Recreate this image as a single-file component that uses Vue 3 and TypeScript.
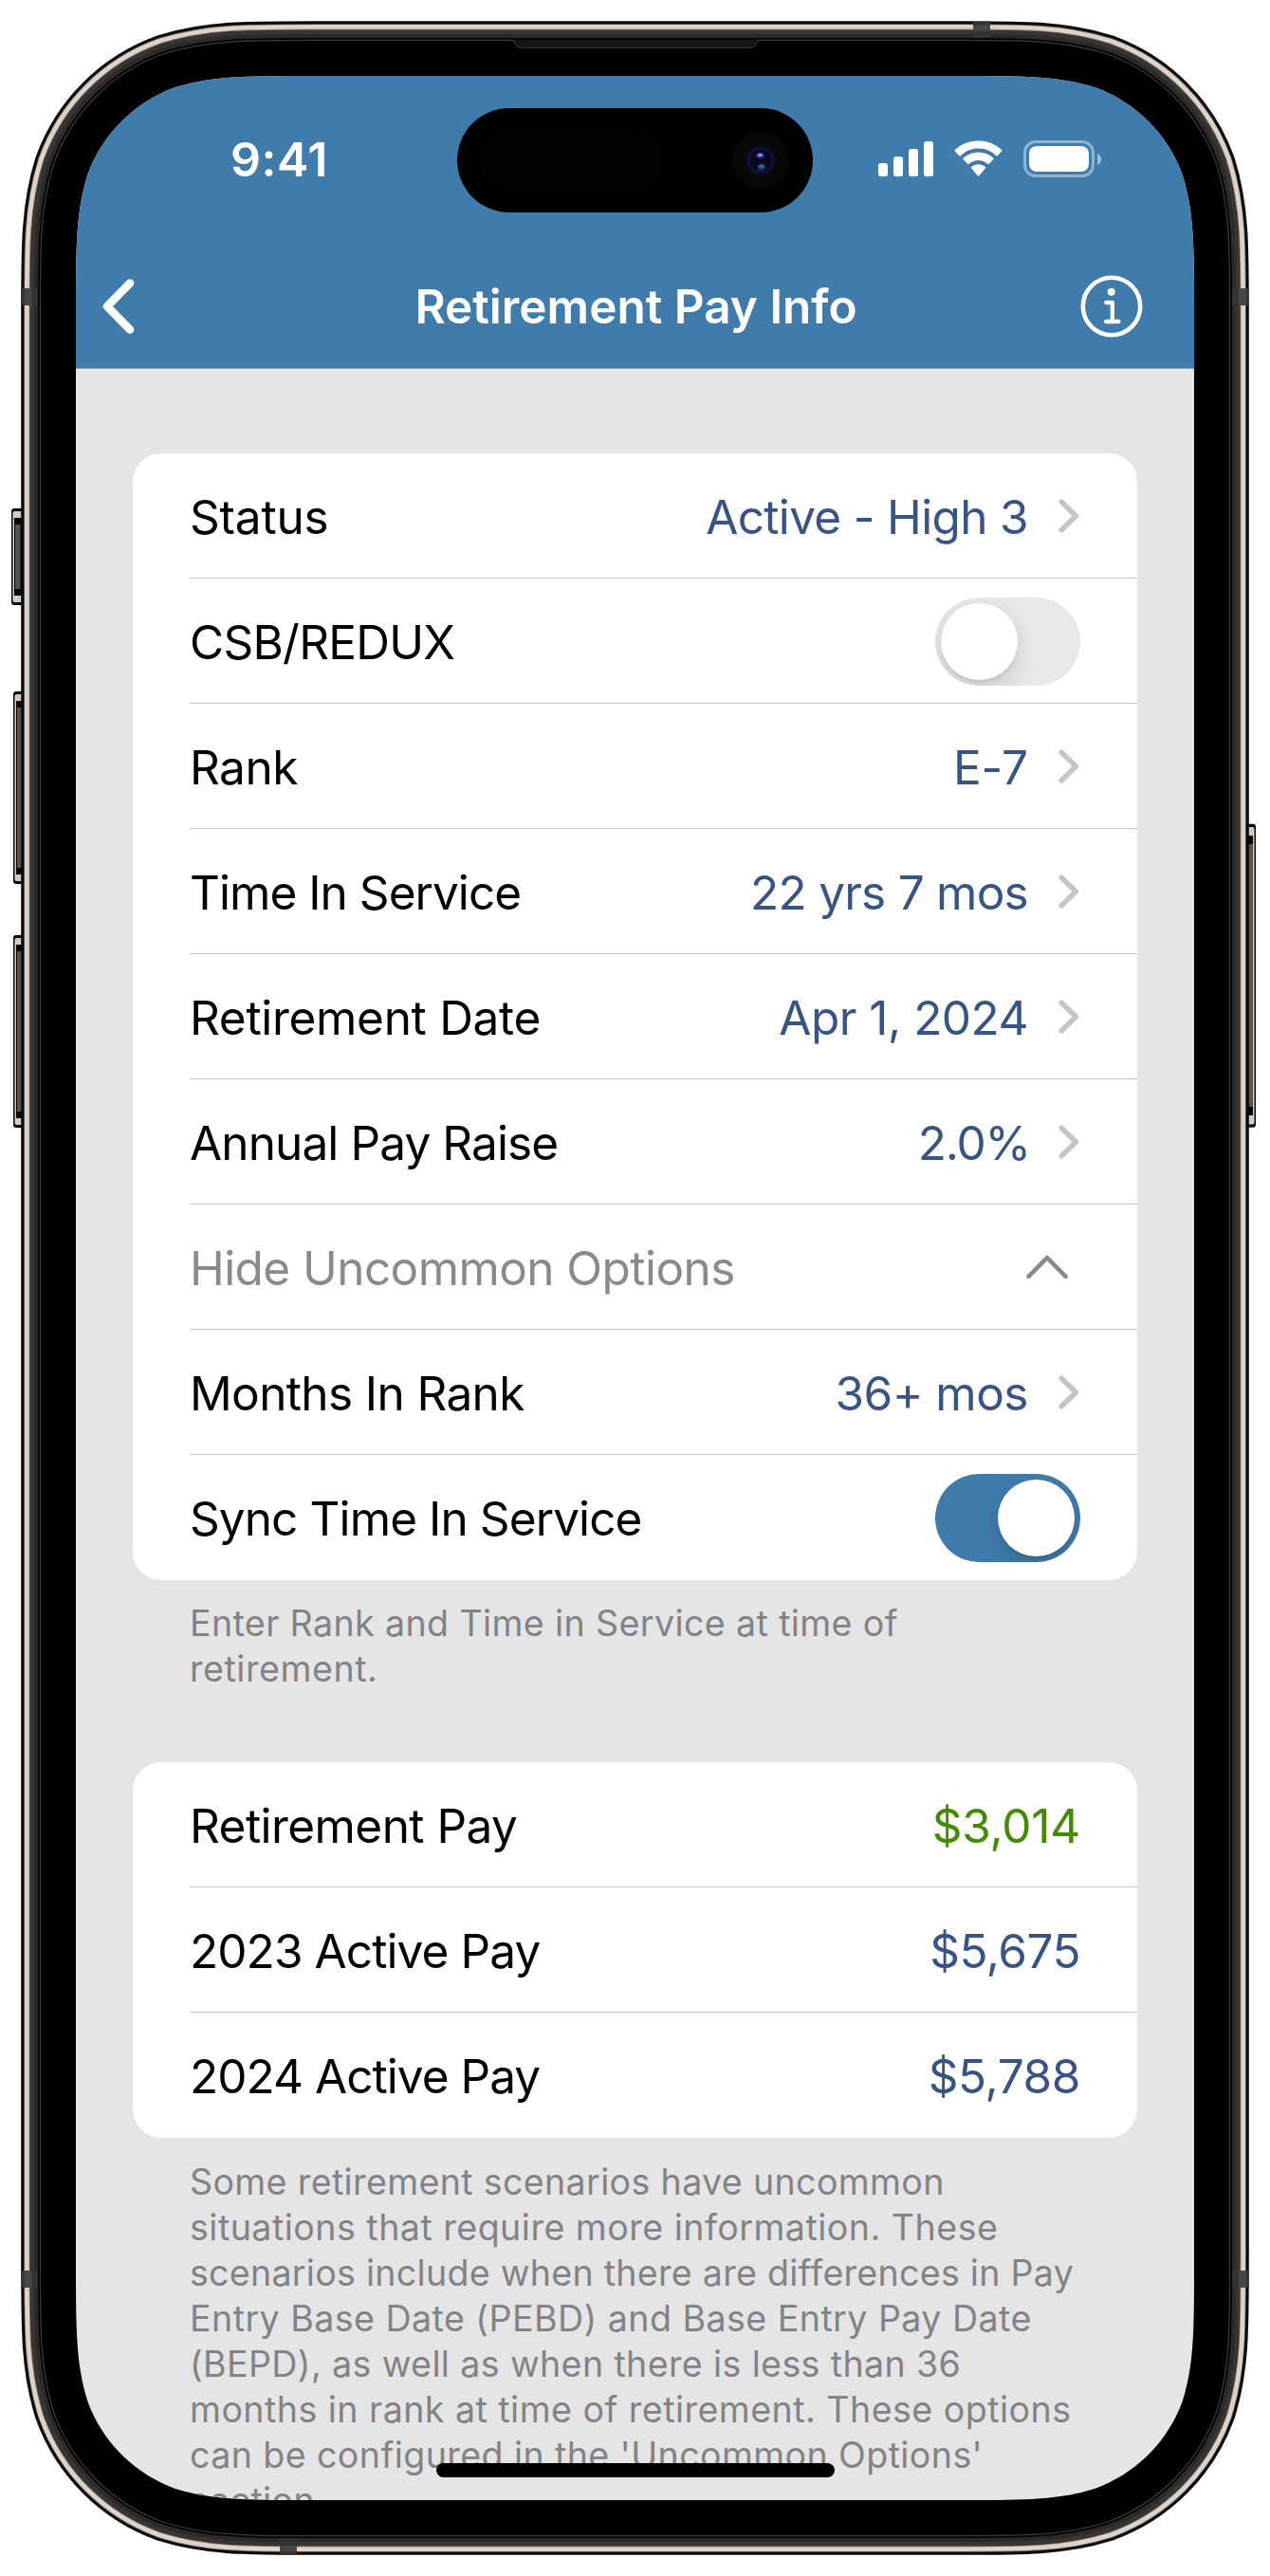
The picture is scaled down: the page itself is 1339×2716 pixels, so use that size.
<script setup lang="ts">
interface Row {
  label: string
  value?: string
  kind: 'link' | 'switch' | 'disclosure' | 'amount'
  on?: boolean
  positive?: boolean
  labelTracking?: number
  valueTracking?: number
}

interface Line {
  text: string
  tracking: number
}

const options: Row[] = [
  { label: 'Status', value: 'Active - High 3', kind: 'link', labelTracking: -0.2, valueTracking: -0.67 },
  { label: 'CSB/REDUX', kind: 'switch', on: false, labelTracking: -0.75 },
  { label: 'Rank', value: 'E-7', kind: 'link', valueTracking: -0.1 },
  { label: 'Time In Service', value: '22 yrs 7 mos', kind: 'link', labelTracking: -0.96, valueTracking: -0.75 },
  { label: 'Retirement Date', value: 'Apr 1, 2024', kind: 'link', labelTracking: -0.3 },
  { label: 'Annual Pay Raise', value: '2.0%', kind: 'link', labelTracking: -0.88, valueTracking: -1.2 },
  { label: 'Hide Uncommon Options', kind: 'disclosure', labelTracking: -0.58 },
  { label: 'Months In Rank', value: '36+ mos', kind: 'link', labelTracking: -0.62 },
  { label: 'Sync Time In Service', kind: 'switch', on: true, labelTracking: -0.9 },
]

const results: Row[] = [
  { label: 'Retirement Pay', value: '$3,014', kind: 'amount', positive: true, labelTracking: -0.55, valueTracking: -0.2 },
  { label: '2023 Active Pay', value: '$5,675', kind: 'amount', labelTracking: -0.9 },
  { label: '2024 Active Pay', value: '$5,788', kind: 'amount', labelTracking: -0.95, valueTracking: -0.4 },
]

const sections: { rows: Row[]; note: Line[] }[] = [
  {
    rows: options,
    note: [
      { text: 'Enter Rank and Time in Service at time of', tracking: 0.38 },
      { text: 'retirement.', tracking: 0.55 },
    ],
  },
  {
    rows: results,
    note: [
      { text: 'Some retirement scenarios have uncommon', tracking: 0.35 },
      { text: 'situations that require more information. These', tracking: 0.48 },
      { text: 'scenarios include when there are differences in Pay', tracking: 0.27 },
      { text: 'Entry Base Date (PEBD) and Base Entry Pay Date', tracking: 0.45 },
      { text: '(BEPD), as well as when there is less than 36', tracking: 0.37 },
      { text: 'months in rank at time of retirement. These options', tracking: 0.46 },
      { text: "can be configured in the 'Uncommon Options'", tracking: 0.4 },
      { text: 'section.', tracking: 0.4 },
    ],
  },
]

function tracking(px: number | undefined) {
  return { letterSpacing: `${px ?? -0.5}px` }
}

// Continuous-curvature rounded rectangle
function squircle(x: number, y: number, w: number, h: number, r: number): string {
  const a = 1.528665 * r
  const b = 1.088493 * r
  const c = 0.868407 * r
  const d = 0.631494 * r
  const e = 0.074911 * r
  const f = 0.372824 * r
  const g = 0.16906 * r
  const R = x + w
  const B = y + h
  const n = (...v: number[]) => v.map((k) => k.toFixed(2)).join(' ')
  return [
    `M${n(x + a, y)}L${n(R - a, y)}`,
    `C${n(R - b, y, R - c, y, R - d, y + e)}C${n(R - f, y + g, R - g, y + f, R - e, y + d)}C${n(R, y + c, R, y + b, R, y + a)}`,
    `L${n(R, B - a)}`,
    `C${n(R, B - b, R, B - c, R - e, B - d)}C${n(R - g, B - f, R - f, B - g, R - d, B - e)}C${n(R - c, B, R - b, B, R - a, B)}`,
    `L${n(x + a, B)}`,
    `C${n(x + b, B, x + c, B, x + d, B - e)}C${n(x + f, B - g, x + g, B - f, x + e, B - d)}C${n(x, B - c, x, B - b, x, B - a)}`,
    `L${n(x, y + a)}`,
    `C${n(x, y + b, x, y + c, x + e, y + d)}C${n(x + g, y + f, x + f, y + g, x + d, y + e)}C${n(x + c, y, x + b, y, x + a, y)}Z`,
  ].join('')
}

const outline = squircle(80, 80, 1179, 2556, 165)
const screenClip = `path("${squircle(0, 0, 1179, 2556, 165)}")`

// Bezel rings, as distance outside the screen edge
const rings = [
  { d: 57.8, color: '#0b0b0b' },
  { d: 54.8, color: '#6b5f57' },
  { d: 54, color: '#dcd3cd' },
  { d: 49.4, color: '#8b8079' },
  { d: 48.6, color: '#383432' },
  { d: 44, color: '#2c2928' },
  { d: 40, color: '#000000' },
  { d: 38.2, color: '#3d3d3c' },
  { d: 37, color: '#000000' },
]

const leftButtons = [
  { x: 12, y: 536, h: 102 },
  { x: 14, y: 729, h: 203 },
  { x: 14, y: 986, h: 203 },
]

const antennas = [
  { x: 22.5, y: 304, w: 17.5, h: 18 },
  { x: 1299, y: 304, w: 17.5, h: 18 },
  { x: 22.5, y: 2394, w: 17.5, h: 18 },
  { x: 1299, y: 2394, w: 17.5, h: 18 },
  { x: 1026, y: 22.5, w: 18, h: 17.5 },
  { x: 295, y: 2676, w: 18, h: 17.5 },
]
</script>

<template>
  <main class="phone">
    <svg class="frame" width="1339" height="2716" viewBox="0 0 1339 2716" aria-hidden="true">
      <g v-for="b in leftButtons" :key="b.y">
        <rect :x="b.x" :y="b.y" width="16" :height="b.h" rx="3" fill="#0a0a0a" />
        <rect :x="b.x + 1.5" :y="b.y + 3" width="16" :height="b.h - 6" rx="2" fill="#d5cbc3" />
        <rect :x="b.x + 3" :y="b.y + 10" width="16" :height="b.h - 20" fill="#000" />
        <rect :x="b.x + 4" :y="b.y + 17" width="5.5" :height="b.h - 34" fill="#55514d" />
      </g>
      <rect x="1308" y="868.7" width="16" height="320" rx="3" fill="#0a0a0a" />
      <rect x="1306" y="872" width="16.5" height="313.5" rx="2" fill="#d5cbc3" />
      <rect x="1306" y="881" width="15" height="295" fill="#000" />
      <rect x="1316" y="890" width="5" height="277" fill="#55514d" />
      <path
        v-for="r in rings"
        :key="r.d"
        :d="outline"
        :fill="r.color"
        :stroke="r.color"
        :stroke-width="r.d * 2"
      />
      <g v-for="(a, i) in antennas" :key="i">
        <rect :x="a.x" :y="a.y" :width="a.w" :height="a.h" fill="#343332" />
        <rect
          :x="a.w < a.h ? a.x + (a.x < 600 ? 3 : 7) : a.x"
          :y="a.w < a.h ? a.y : a.y + (a.y < 600 ? 4 : 8)"
          :width="a.w < a.h ? 8 : 18"
          :height="a.w < a.h ? 18 : 6"
          fill="#474644"
        />
      </g>
      <path d="M541 41.5q1.5 9 8 9h242q6.500 0 8-9z" fill="#151414" stroke="#353332" stroke-width="1" />
      <rect x="541" y="40.5" width="259" height="1.500" fill="#060606" />
    </svg>

    <div class="screen" :style="{ clipPath: screenClip }">
      <header class="header">
        <div class="status-bar">
          <span class="time">9:41</span>
          <svg class="indicators" width="236" height="40" viewBox="0 0 236 40" aria-hidden="true">
            <g fill="#fff">
              <rect x="0" y="24" width="10" height="14" rx="2.800" />
              <rect x="16" y="17" width="10" height="21" rx="2.800" />
              <rect x="32" y="9" width="10" height="29" rx="2.800" />
              <rect x="48" y="1" width="10" height="37" rx="2.800" />
              <path d="M105.500 8.600c7 0 13.700 2.700 18.700 7.600.4.400 1 .4 1.400 0l4.500-4.600a1.100 1.100 0 0 0 0-1.600 35.700 35.700 0 0 0-49.200 0 1.100 1.100 0 0 0 0 1.600l4.500 4.600c.4.400 1 .4 1.400 0a26.700 26.700 0 0 1 18.700-7.600z" />
              <path d="M105.500 21c3.600 0 7.100 1.300 9.800 3.800.4.400 1 .4 1.400 0l4.500-4.600a1.100 1.100 0 0 0 0-1.600 23 23 0 0 0-31.400 0 1.100 1.100 0 0 0 0 1.600l4.500 4.600c.4.400 1 .4 1.400 0 2.700-2.500 6.200-3.800 9.800-3.800z" />
              <path d="M112.800 28.400a1.100 1.100 0 0 0 0-1.600 11.300 11.300 0 0 0-14.600 0 1.100 1.100 0 0 0 0 1.600l6.500 7.900c.4.500 1.200.5 1.600 0z" transform="translate(0 1)" />
              <rect x="159" y="6" width="63" height="27" rx="8" />
              <path d="M231 14v12c2.500-1 4.200-3.300 4.200-6s-1.700-5-4.200-6z" opacity=".5" />
            </g>
            <rect x="154.500" y="1.500" width="72" height="36" rx="11.500" fill="none" stroke="#fff" stroke-width="3" opacity=".42" />
          </svg>
          <div class="island">
            <div class="sensor"></div>
            <svg class="camera" width="60" height="60" viewBox="0 0 60 60" aria-hidden="true">
              <circle cx="30" cy="30" r="30" fill="#070707" />
              <circle cx="30" cy="30" r="16" fill="#0c0c1e" />
              <circle cx="30" cy="30" r="12.500" fill="#08081f" stroke="#13133f" stroke-width="2" />
              <ellipse cx="29.500" cy="25" rx="4.600" ry="3.600" fill="#2b287c" />
              <ellipse cx="29.500" cy="24.500" rx="2.600" ry="1.600" fill="#7d9fe0" />
              <ellipse cx="30.500" cy="37.500" rx="4.600" ry="3.800" fill="#232166" />
              <ellipse cx="31" cy="36.500" rx="2.800" ry="2.200" fill="#2f6673" />
            </svg>
          </div>
        </div>
        <nav class="nav">
          <svg width="34" height="58" viewBox="0 0 34 58" aria-hidden="true">
            <path d="M29 4.500 5 29l24 24.500" fill="none" stroke="#fff" stroke-width="8.500" stroke-linecap="round" stroke-linejoin="round" />
          </svg>
          <h1 class="title">Retirement Pay Info</h1>
          <svg width="66" height="66" viewBox="0 0 66 66" aria-hidden="true">
            <circle cx="33" cy="33" r="30.200" fill="none" stroke="#fff" stroke-width="4.600" />
            <circle cx="32.700" cy="17.700" r="4" fill="#fff" />
            <path d="M27.200 29h6.600v20M27 49h13.400" fill="none" stroke="#fff" stroke-width="4.300" stroke-linecap="round" stroke-linejoin="round" />
          </svg>
        </nav>
      </header>

      <div class="content">
        <section v-for="(section, s) in sections" :key="s" class="section">
          <div class="card">
            <div v-for="row in section.rows" :key="row.label" class="row" :class="row.kind">
              <span class="label" :style="tracking(row.labelTracking)">{{ row.label }}</span>
              <span
                v-if="row.value"
                class="value"
                :class="{ positive: row.positive, percent: row.value.endsWith('%') }"
                :style="tracking(row.valueTracking)"
              >{{ row.value }}</span>
              <svg v-if="row.kind === 'link'" class="chevron" width="22" height="36" viewBox="0 0 22 36" aria-hidden="true">
                <path d="M3.200 3.200 18.300 18 3.200 32.800" fill="none" stroke="#c5c5c7" stroke-width="5.600" stroke-linecap="round" stroke-linejoin="round" />
              </svg>
              <svg v-if="row.kind === 'disclosure'" class="caret" width="44" height="26" viewBox="0 0 44 26" aria-hidden="true">
                <path d="M2.500 22.800 22 3l19.500 19.800" fill="none" stroke="#8a8a8e" stroke-width="4.600" stroke-linecap="round" stroke-linejoin="round" />
              </svg>
              <span v-if="row.kind === 'switch'" class="track" :class="{ on: row.on }"><i class="knob"></i></span>
            </div>
          </div>
          <p class="note">
            <span v-for="line in section.note" :key="line.text" :style="tracking(line.tracking)">{{ line.text }}</span>
          </p>
        </section>
      </div>
      <div class="home-indicator"></div>
    </div>
  </main>
</template>

<style>
body {
  margin: 0;
  background: #fff;
}
</style>

<style scoped>
.phone {
  position: relative;
  box-sizing: border-box;
  width: 1339px;
  height: 2716px;
  padding: 80px;
  overflow: hidden;
  font-family: Inter, 'Liberation Sans', sans-serif;
}
.frame {
  position: absolute;
  left: 0;
  top: 0;
}
.screen {
  position: relative;
  width: 1179px;
  height: 2556px;
  overflow: hidden;
  background: #e5e5e5;
}
.header {
  box-sizing: border-box;
  height: 309px;
  background: #407cab;
  border-bottom: 1px solid #8fa0ad;
  color: #fff;
}
.status-bar {
  position: relative;
  display: flex;
  align-items: center;
  justify-content: space-between;
  box-sizing: border-box;
  height: 177px;
  padding: 0 97px 2px 163px;
}
.time {
  font-size: 50px;
  font-weight: 600;
  letter-spacing: 0.5px;
}
.island {
  position: absolute;
  left: 402px;
  top: 34px;
  display: flex;
  align-items: center;
  justify-content: space-between;
  box-sizing: border-box;
  width: 375px;
  height: 110px;
  padding: 0 25px 0 22px;
  border-radius: 55px;
  background: #000;
}
.sensor {
  width: 194px;
  height: 66px;
  border-radius: 33px;
  background: #030303;
}
.nav {
  display: flex;
  align-items: center;
  box-sizing: border-box;
  height: 132px;
  padding: 0 54px 0 28px;
}
.title {
  flex: 1;
  margin: 0;
  padding-left: 60px;
  text-align: center;
  font-size: 49.5px;
  font-weight: 600;
  letter-spacing: 0;
}
.content {
  padding: 89px 60px 0;
}
.section {
  margin-bottom: 74px;
}
.card {
  overflow: hidden;
  border-radius: 30px;
  background: #fff;
}
.row {
  display: flex;
  align-items: center;
  box-sizing: border-box;
  height: 132px;
  padding-right: 60px;
  margin-left: 60px;
  border-bottom: 1px solid #c6c6c8;
  font-size: 49.5px;
  line-height: 60px;
  color: #000;
  white-space: nowrap;
}
.row:last-child {
  border-bottom-color: transparent;
}
.label {
  flex: 1;
  padding-top: 2px;
}
.value {
  padding-top: 2px;
  color: #385487;
}
.positive {
  color: #428c00;
}
.percent {
  margin-right: -2px;
}
.disclosure .label {
  color: #8a8a8e;
}
.chevron {
  margin: 0 1px 0 32px;
}
.caret {
  margin-right: 13px;
}
.track {
  box-sizing: border-box;
  width: 153px;
  height: 93px;
  padding: 6px;
  margin-top: 1px;
  border-radius: 47px;
  background: #e9e9eb;
  overflow: hidden;
}
.knob {
  display: block;
  width: 81px;
  height: 81px;
  border-radius: 50%;
  background: #fff;
  box-shadow: 0 9px 24px rgba(0, 0, 0, 0.15), 0 3px 3px rgba(0, 0, 0, 0.06);
}
.track.on {
  background: #407cab;
}
.on .knob {
  margin-left: 60px;
}
.note {
  margin: 22px 60px 0;
  font-size: 37.6px;
  line-height: 48px;
  color: #838387;
  white-space: nowrap;
}
.section:last-child .note {
  margin-top: 23px;
}
.note span {
  display: block;
}
.home-indicator {
  position: absolute;
  left: 380px;
  top: 2517px;
  width: 420px;
  height: 15px;
  border-radius: 8px;
  background: #000;
}
</style>
